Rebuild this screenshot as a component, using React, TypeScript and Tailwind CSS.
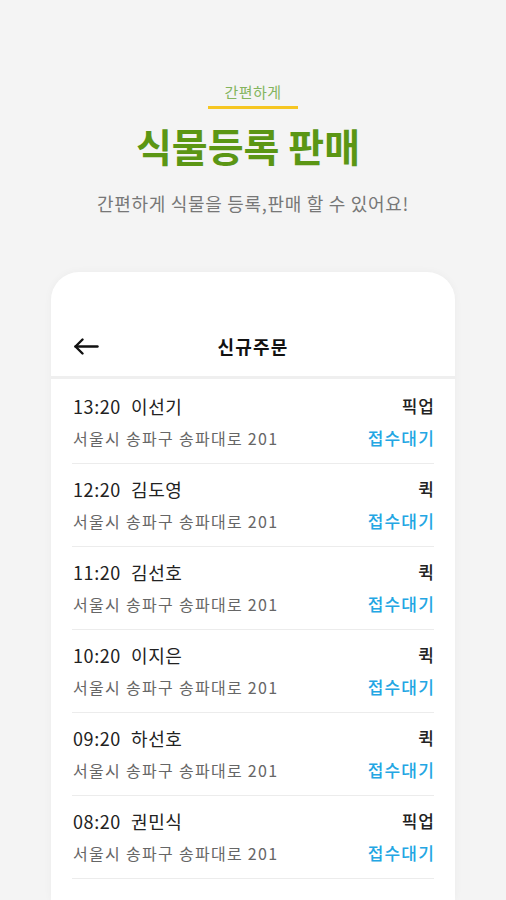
import React from 'react';

const orders = [
  { time: '13:20', name: '이선기', type: '픽업' },
  { time: '12:20', name: '김도영', type: '퀵' },
  { time: '11:20', name: '김선호', type: '퀵' },
  { time: '10:20', name: '이지은', type: '퀵' },
  { time: '09:20', name: '하선호', type: '퀵' },
  { time: '08:20', name: '권민식', type: '픽업' },
];

const font = { fontFamily: '"Noto Sans CJK KR", "Noto Sans", sans-serif' };

const App = () => {
  return (
    <div className="min-h-[900px] h-[900px] overflow-hidden bg-[#f4f4f4] flex flex-col items-center pt-[82px]" style={font}>
      {/* Intro */}
      <span className="text-[15px] leading-5 tracking-[0.5px] text-[#84b45e]">간편하게</span>
      <div className="mt-[4px] h-[3px] w-[90px] bg-[#f6c622]" />
      <h1 className="mt-[12px] pr-[10px] text-[39px] leading-[48px] font-bold text-[#5b9614]">식물등록 판매</h1>
      <p className="mt-[22px] text-[18px] leading-6 tracking-[0.7px] text-[#777777]">간편하게 식물을 등록,판매 할 수 있어요!</p>

      {/* Card */}
      <div className="mt-[57px] w-[404px] flex-1 bg-white rounded-t-[28px] shadow-[0_0_8px_rgba(0,0,0,0.04)] pt-[52px]">
        <div className="relative h-[44px] flex items-center justify-center">
          <svg className="absolute left-[22px] top-[14px]" width="26" height="17" viewBox="0 0 26 17" fill="none" stroke="#111" strokeWidth="2.4" strokeLinecap="round" strokeLinejoin="round">
            <path d="M24.5 8.5H2.5" />
            <path d="M9.5 1.5L2.5 8.5l7 7" />
          </svg>
          <span className="text-[18px] font-bold tracking-[1.2px] text-[#111]">신규주문</span>
        </div>
        <div className="mt-2 h-[3px] bg-[#efefef]" />

        <ul className="mx-[21px]">
          {orders.map((o, i) => (
            <li key={i} className={`flex flex-col gap-2 border-b border-[#ececec] pl-px pb-[13px] ${i === 0 ? 'pt-[15px]' : 'pt-[13px]'}`}>
              <div className="flex items-center justify-between h-6">
                <span className="text-[18px] tracking-[0.6px] text-[#222]">
                  {o.time}
                  <span className="ml-[10px]">{o.name}</span>
                </span>
                <span className="text-[17px] font-medium tracking-[1px] -mr-[1px] text-[#222]">{o.type}</span>
              </div>
              <div className="flex items-center justify-between h-6">
                <span className="text-[16px] tracking-[1.3px] text-[#666]">서울시 송파구 송파대로 201</span>
                <span className="text-[17px] font-medium tracking-[1.2px] -mr-[1px] text-[#23a6e3]">접수대기</span>
              </div>
            </li>
          ))}
        </ul>
      </div>
    </div>
  );
};

export default App;
